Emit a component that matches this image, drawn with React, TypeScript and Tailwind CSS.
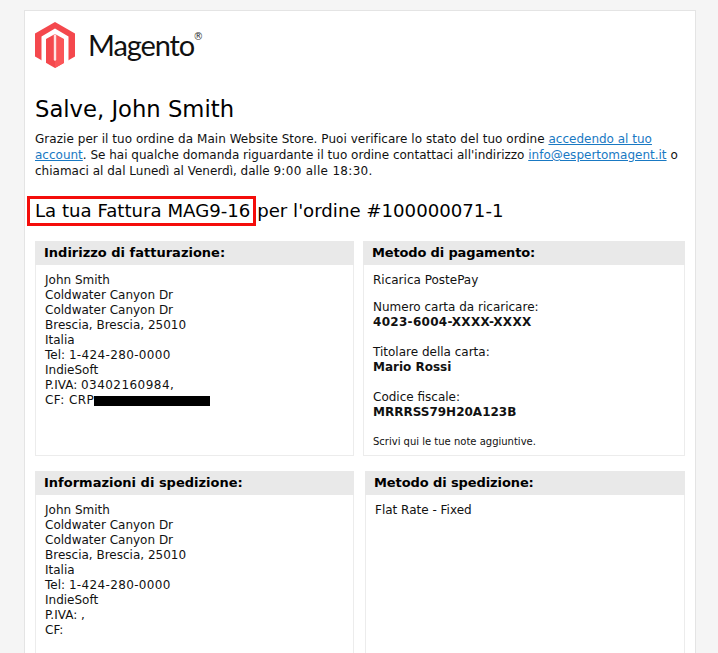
const Logo = () => (
  <svg width="40" height="46" viewBox="0 0 40 46" className="shrink-0">
    <path d="M20 0 L40 11.5 L40 34.5 L20 46 L0 34.5 L0 11.5 Z" fill="#f4484d" />
    <path d="M20 12 L29 17 L29 41 L20 46 Z" fill="#fb5558" />
    <path
      d="M6.5 14.5 L20 6.5 L33.5 14.5 L33.5 40 L29 43 L29 17 L20 12 L11 17 L11 43 L6.5 40 Z"
      fill="#fff"
    />
    <path d="M18.8 12.5 H21.2 V38 L20 39 L18.8 38 Z" fill="#ffe3e3" />
  </svg>
);

const Box = ({
  title,
  className,
  titleClass,
  children,
}: {
  title: string;
  className: string;
  titleClass: string;
  children: React.ReactNode;
}) => (
  <div className={`border border-t-0 border-[#ececec] bg-white ${className}`}>
    <div className={`-mx-px h-6 bg-[#e9e9e9] pl-[9px] text-[13px] leading-6 font-bold text-black ${titleClass}`}>
      {title}
    </div>
    <div className="pt-[8px] pl-[9px]">{children}</div>
  </div>
);

export default function App() {
  return (
    <div className="h-[653px] overflow-hidden bg-[#f5f5f5] pt-[10px] pl-[24px] font-['DejaVu_Sans',Verdana,sans-serif] text-[12px] leading-[15px] text-[#111]">
      <div className="h-[700px] w-[672px] border border-[#e4e4e4] bg-white pl-[10px]">
        <div className="flex h-[60px] items-start pt-[11px]">
          <Logo />
          <span className="ml-[13px] font-['Lato',sans-serif] text-[29px] leading-[46px] tracking-[-1.1px] text-[#111]">
            Magento
          </span>
          <span className="mt-[8px] -ml-[1px] text-[10px] leading-[14px] text-[#333]">®</span>
        </div>

        <h1 className="mt-[25px] text-[22.7px] leading-[27px] font-normal text-black">Salve, John Smith</h1>

        <p className="mt-[8px] w-[645px] leading-[16px]">
          <span className="tracking-[0.045px]">
            Grazie per il tuo ordine da Main Website Store. Puoi verificare lo stato del tuo ordine
          </span>{" "}
          <a className="text-[#1979c3] underline">accedendo al tuo account</a>. Se hai qualche domanda riguardante il tuo
          ordine contattaci all'indirizzo <a className="text-[#1979c3] underline">info@espertomagent.it</a> o chiamaci al
          dal Lunedì al Venerdì, dalle <span className="tracking-[0.3px]">9:00 alle 18:30.</span>
        </p>

        <h2 className="mt-[21px] text-[18.15px] leading-[22px] font-normal text-black">
          <span className="relative mr-px">
            La tua Fattura MAG9-16
            <span className="absolute -top-[4px] -right-[6px] -bottom-[5px] -left-[8px] border-[3px] border-[#f40d0a]" />
          </span>{" "}
          per l'ordine #100000071-1
        </h2>

        <div className="mt-[19px] flex">
          <Box title="Indirizzo di fatturazione:" className="h-[215px] w-[319px]" titleClass="">
            John Smith
            <br />
            Coldwater Canyon Dr
            <br />
            Coldwater Canyon Dr
            <br />
            Brescia, Brescia, 25010
            <br />
            Italia
            <br />
            Tel: <span className="tracking-[0.35px]">1-424-280-0000</span>
            <br />
            IndieSoft
            <br />
            P.IVA: <span className="tracking-[0.45px]">03402160984,</span>
            <br />
            <span className="flex items-center">
              <span className="tracking-[0.45px]">CF: CRP</span>
              <span className="h-[10px] w-[116px] bg-black" />
            </span>
          </Box>
          <Box title="Metodo di pagamento:" className="ml-[9px] h-[215px] w-[322px]" titleClass="tracking-[-0.15px]">
            <p>Ricarica PostePay</p>
            <p className="mt-[12px]">Numero carta da ricaricare:</p>
            <p className="font-bold tracking-[0.3px]">4023-6004-XXXX-XXXX</p>
            <p className="mt-[15px]">Titolare della carta:</p>
            <p className="font-bold">Mario Rossi</p>
            <p className="mt-[15px]">Codice fiscale:</p>
            <p className="font-bold">MRRRSS79H20A123B</p>
            <p className="mt-[14px] text-[10px]">Scrivi qui le tue note aggiuntive.</p>
          </Box>
        </div>

        <div className="mt-[15px] flex">
          <Box title="Informazioni di spedizione:" className="h-[240px] w-[319px]" titleClass="">
            John Smith
            <br />
            Coldwater Canyon Dr
            <br />
            Coldwater Canyon Dr
            <br />
            Brescia, Brescia, 25010
            <br />
            Italia
            <br />
            Tel: <span className="tracking-[0.35px]">1-424-280-0000</span>
            <br />
            IndieSoft
            <br />
            P.IVA: ,
            <br />
            CF:
          </Box>
          <Box title="Metodo di spedizione:" className="ml-[11px] h-[240px] w-[320px]" titleClass="tracking-[-0.1px]">
            Flat Rate - Fixed
          </Box>
        </div>
      </div>
    </div>
  );
}
